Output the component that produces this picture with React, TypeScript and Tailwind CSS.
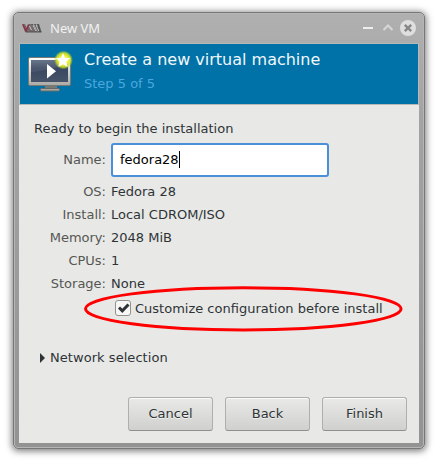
import React from "react";

const details = [
  ["OS:", "Fedora 28"],
  ["Install:", "Local CDROM/ISO"],
  ["Memory:", "2048 MiB"],
  ["CPUs:", "1"],
  ["Storage:", "None"],
];

function TitleIcon() {
  return (
    <svg width="20" height="12" viewBox="0 0 20 12" fill="none">
      <path d="M0 2h3l2 4 1-4h3l4 8H3z" fill="#77696b" />
      <path d="M9 2h2l4 8h-2zM12 2h2l4 8h-2zM15 2h2l2.5 8H17z" fill="#555" />
      <path d="M.8 2.5 4 9l2.5-6" stroke="#8a3044" strokeWidth="1.4" />
      <path d="m7.5 4 2 4M10.8 3l3 6M14 3l2.8 6" stroke="#dededa" strokeWidth=".8" />
      <path d="M4 10h15.5" stroke="#555" strokeWidth="1" />
    </svg>
  );
}

function MachineIcon() {
  return (
    <svg className="-mt-0.5 shrink-0" width="48" height="43" viewBox="0 0 48 43">
      <defs>
        <linearGradient id="screen" x1="0" y1="0" x2="0" y2="1">
          <stop stopColor="#5b6980" />
          <stop offset=".4" stopColor="#394760" />
          <stop offset="1" stopColor="#465369" />
        </linearGradient>
        <linearGradient id="frame" x1="0" y1="0" x2="0" y2="1">
          <stop stopColor="#fff" />
          <stop offset="1" stopColor="#a9a9a5" />
        </linearGradient>
        <radialGradient id="glow">
          <stop offset=".45" stopColor="#f4f23c" />
          <stop offset=".75" stopColor="#d7e51c" stopOpacity=".85" />
          <stop offset="1" stopColor="#a4d52b" stopOpacity="0" />
        </radialGradient>
      </defs>
      <path d="M18 35h12v4H18z" fill="#777975" />
      <rect x="13.5" y="38.5" width="19" height="2.5" rx="1" fill="#a8a9a4" stroke="#666965" />
      <rect x="1.5" y="7.5" width="42" height="28" rx="1.5" fill="url(#frame)" stroke="#777975" />
      <rect x="4" y="10" width="37" height="22" fill="url(#screen)" />
      <path d="M4 10h37v3Q27 20 4 22z" fill="#fff" opacity=".08" />
      <path d="M20 14v14.5l9-7.3z" fill="#fff" />
      <circle cx="36.5" cy="10" r="9.5" fill="url(#glow)" />
      <path d="m36 3 2 4.8 5.2.2-3.8 3.8 1.2 5.2-4.6-2.7-4.5 2.7 1-5.2L29 8l5-.3z" fill="#fff" />
    </svg>
  );
}

function Button({ children }: { children: React.ReactNode }) {
  return (
    <button className="h-[34px] w-[85px] rounded-[3px] border border-[#afb0ae] border-b-[#8f908e] bg-linear-to-b from-[#e9e9e7] to-[#d0d0ce] pb-0.5 text-center shadow-[inset_0_1px_0_#fafafa] [text-shadow:0_1px_0_#f2f2f0]">
      {children}
    </button>
  );
}

export default function App() {
  return (
    <div className="h-[462px] w-[438px] overflow-hidden bg-white pt-3 pl-[13px] font-['DejaVu_Sans',sans-serif] text-[13px] leading-[23px] text-[#2e3436]">
      <div className="relative flex h-[437px] w-[412px] flex-col rounded-[5px] border border-[#777] bg-linear-to-b from-[#b0b0b0] via-[#a3a3a3] via-25% to-[#939393] px-[5px] pb-[5px] shadow-[0_1px_7px_1px_#777,inset_0_0_0_1px_#b6b6b6]">
        <div className="flex h-[30px] shrink-0 items-center pl-[3px] pr-[3px] text-[#f1f1f1]">
          <TitleIcon />
          <span className="ml-2 font-['Noto_Sans',sans-serif] text-[13px]">New VM</span>
          <svg className="ml-auto" width="54" height="18" viewBox="0 0 54 18" fill="none">
            <path d="M1 9h10" stroke="#eee" strokeWidth="2" />
            <path d="m21.5 11 4.5-4.5 4.5 4.5" stroke="#d7d7d7" strokeWidth="2" />
            <circle cx="46" cy="9" r="8" fill="#dfdfdf" />
            <path d="m42.8 5.8 6.4 6.4m0-6.4-6.4 6.4" stroke="#888" strokeWidth="2.4" />
          </svg>
        </div>
        <main className="flex w-[400px] flex-1 flex-col bg-[#e8e8e6]">
          <header className="flex h-[62px] border border-[#b7b9b7] bg-[#0072a8] pl-[7px] pt-2">
            <MachineIcon />
            <div className="ml-[9px] flex flex-col">
              <h1 className="-mt-[3px] h-[25px] whitespace-nowrap text-[16px] leading-[22px] text-[#f1f7fa]">Create a new virtual machine</h1>
              <p className="leading-[20px] text-[#4ba7df]">Step 5 of 5</p>
            </div>
          </header>
          <section className="flex flex-col pl-[15px] pt-3">
            <p className="h-[26px]">Ready to begin the installation</p>
            <div className="grid grid-cols-[72px_218px] gap-x-[5px]">
              <span className="pt-[5px] text-right text-[#555753]">Name:</span>
              <div className="flex h-[34px] items-center rounded-[3px] border-2 border-[#4a90d9] bg-white pb-0.5 pl-[7px] text-black">
                <span>fedora28</span>
                <span className="h-[17px] w-px bg-black" />
              </div>
            </div>
            <dl className="mt-[3px] grid grid-cols-[72px_1fr] gap-x-[5px]">
              {details.map(([label, value]) => (
                <React.Fragment key={label}>
                  <dt className="text-right text-[#555753]">{label}</dt>
                  <dd>{value}</dd>
                </React.Fragment>
              ))}
            </dl>
            <div className="mt-0.5 flex h-[23px] items-center pl-[81px]">
              <svg width="16" height="17" viewBox="0 0 16 17" fill="none">
                <rect x=".5" y=".5" width="15" height="15" rx="2.5" fill="#f7f7f6" stroke="#92918b" />
                <path d="m4 7.5 3.3 3.3 6.2-6.3" stroke="#2e3436" strokeWidth="3" />
              </svg>
              <span className="ml-1 whitespace-nowrap">Customize configuration before install</span>
            </div>
            <div className="mt-[26px] flex items-center pl-1.5">
              <span className="h-0 w-0 border-y-[5px] border-l-[5px] border-y-transparent border-l-[#2e3436]" />
              <span className="ml-[5px] tracking-[0.05px]">Network selection</span>
            </div>
          </section>
          <footer className="mt-auto mb-3 mr-3 flex justify-end gap-3">
            <Button>Cancel</Button>
            <Button>Back</Button>
            <Button>Finish</Button>
          </footer>
        </main>
        <svg className="absolute left-[69px] top-[272px]" width="322" height="49" viewBox="0 0 322 49" fill="none">
          <ellipse cx="160.3" cy="23.8" rx="157.8" ry="21.1" stroke="#f00" strokeWidth="3" />
        </svg>
      </div>
    </div>
  );
}
